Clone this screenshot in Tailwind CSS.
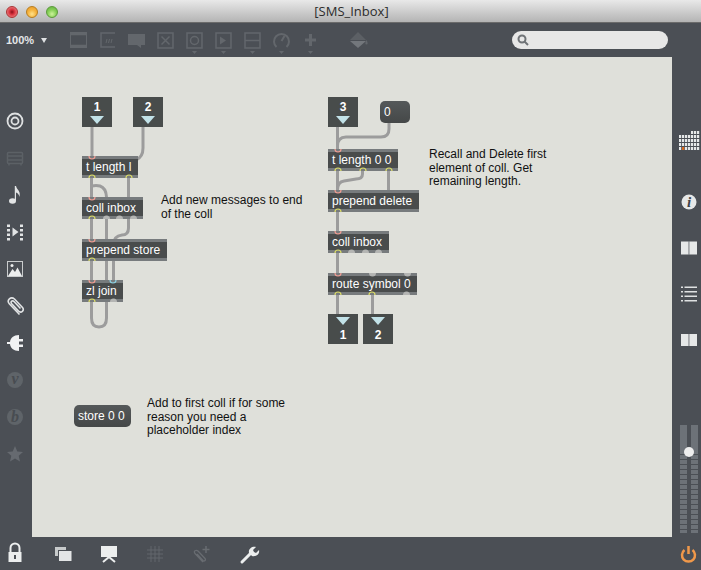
<!DOCTYPE html>
<html lang="en">
<head>
<meta charset="UTF-8">
<title>[SMS_Inbox]</title>
<script src="https://cdn.jsdelivr.net/npm/@tailwindcss/browser@4"></script>
</head>
<body class="w-[701px] h-[570px] overflow-hidden bg-[#4b4f55] font-['Liberation_Sans',Arial,sans-serif]">

<!-- title bar -->
<header class="h-[23px] relative flex items-center justify-center bg-gradient-to-b from-[#e9e9e9] to-[#b4b4b4] border-b border-[#6b6b6b]">
  <div class="absolute left-[6px] top-[6px] flex gap-[8px]">
    <span class="w-[12px] h-[12px] rounded-full border border-[#a33] bg-[radial-gradient(circle_at_50%_50%,#8a0f1a_0,#d8323c_35%,#f6a0a0_100%)]"></span>
    <span class="w-[12px] h-[12px] rounded-full border border-[#b87d1e] bg-[radial-gradient(circle_at_50%_70%,#ffe28a_0,#f5b23c_50%,#e89a2a_100%)]"></span>
    <span class="w-[12px] h-[12px] rounded-full border border-[#5b9a3a] bg-[radial-gradient(circle_at_50%_70%,#cdf39a_0,#86cf57_50%,#62b040_100%)]"></span>
  </div>
  <span class="text-[13px] leading-none text-[#2c2c2c] font-['Open_Sans',sans-serif] ml-[2px]">[SMS_Inbox]</span>
</header>

<!-- toolbar -->
<div class="h-[34px] flex items-start bg-[#4b4f55]">
  <div class="w-[64px] flex items-center pl-[6px] h-[34px] gap-[7px]">
    <span class="text-[11px] font-bold text-[#e4e6e8]">100%</span>
    <svg width="6" height="5" viewBox="0 0 6 5"><path d="M0 0h6L3 5z" fill="#dfe1e3"/></svg>
  </div>
  <svg width="29" height="34" viewBox="0 0 29 34" fill="none" stroke="#63676c"><rect x="6.500" y="9.500" width="16" height="15"/><path d="M7 11h15M7 23h15" stroke-width="2.500"/></svg>
  <svg width="29" height="34" viewBox="0 0 29 34" fill="none" stroke="#63676c" stroke-width="1.500"><path d="M22 10H8v14h14"/><path d="M13 20l1-4M15.500 20l1-4M18 20l1-4" stroke-width="1"/></svg>
  <svg width="29" height="34" viewBox="0 0 29 34"><path d="M6 11h17v11h-4v3l-4-3H6z" fill="#63676c"/></svg>
  <svg width="29" height="34" viewBox="0 0 29 34" fill="none" stroke="#63676c" stroke-width="1.500"><rect x="7" y="10" width="15" height="15"/><path d="M10.500 13.500l8 8M18.500 13.500l-8 8"/></svg>
  <svg width="29" height="34" viewBox="0 0 29 34" fill="none" stroke="#63676c" stroke-width="1.500"><rect x="7" y="10" width="15" height="15"/><circle cx="14.500" cy="17.500" r="4"/><path d="M12 28h5l-2.500 3z" fill="#63676c" stroke="none"/></svg>
  <svg width="29" height="34" viewBox="0 0 29 34" fill="none" stroke="#63676c" stroke-width="1.500"><rect x="7" y="10" width="15" height="15"/><path d="M11 13.500l6 4-6 4z" fill="#63676c" stroke="none"/><path d="M12 28h5l-2.500 3z" fill="#63676c" stroke="none"/></svg>
  <svg width="29" height="34" viewBox="0 0 29 34" fill="none" stroke="#63676c" stroke-width="1.500"><rect x="7" y="10" width="15" height="15"/><path d="M7 17.500h15"/><path d="M12 28h5l-2.500 3z" fill="#63676c" stroke="none"/></svg>
  <svg width="29" height="34" viewBox="0 0 29 34" fill="none" stroke="#63676c" stroke-width="2"><path d="M9.500 24a7.500 7.500 0 1 1 10 0"/><path d="M14.500 18l3-5"/><path d="M12 28h5l-2.500 3z" fill="#63676c" stroke="none"/></svg>
  <svg width="29" height="34" viewBox="0 0 29 34" fill="none" stroke="#63676c" stroke-width="3"><path d="M14.500 11v12M9 17h11"/><path d="M12 28h5l-2.500 3z" fill="#63676c" stroke="none"/></svg>
  <svg class="ml-[19px]" width="29" height="34" viewBox="0 0 29 34"><path d="M14 9l8 8H6z" fill="#5c6065"/><path d="M6 18h16l-8 7z" fill="#73777c"/><path d="M22.500 17c1.500 2.500 1.500 4.500 0 4.500s-1.500-2 0-4.500z" fill="#63676c"/></svg>
  <div class="ml-auto mr-[33px] mt-[8px] w-[156px] h-[18px] rounded-full bg-[#e7e7e7] flex items-center pl-[5px]">
    <svg width="12" height="12" viewBox="0 0 12 12" fill="none" stroke="#6f7377" stroke-width="2"><circle cx="5" cy="5" r="3.500"/><path d="M7.500 7.500L11 11"/></svg>
  </div>
</div>

<div class="h-[480px] flex">
  <!-- left rail -->
  <nav class="w-[32px] pt-[45px] flex flex-col">
    <svg width="32" height="37" viewBox="0 0 32 37" fill="none" stroke="#dfe1e2" stroke-width="1.800"><circle cx="15" cy="19" r="7.500"/><circle cx="15" cy="19" r="3.500"/></svg>
    <svg width="32" height="37" viewBox="0 0 32 37" fill="none" stroke="#5c6166" stroke-width="1.500"><rect x="7.500" y="13.500" width="15" height="11" rx="1"/><path d="M7.500 17h15M7.500 21h15M9 25v1.500M21 25v1.500"/></svg>
    <svg width="32" height="37" viewBox="0 0 32 37"><ellipse cx="12.500" cy="25" rx="3.500" ry="2.800" fill="#e2e4e5"/><path d="M14.800 10h1.200c.7 4 5 4.500 3.500 11-.5-2.500-2-4-3.500-4.500V25h-1.200z" fill="#e2e4e5"/></svg>
    <svg width="32" height="37" viewBox="0 0 32 37"><path d="M12.500 14.500l6 4.500-6 4.500z" fill="#e2e4e5"/><path d="M7 11.500h3v2.500H7zM7 16h3v2.500H7zM7 20.500h3V23H7zM7 25h3v2.500H7zM20 11.500h3v2.500h-3zM20 16h3v2.500h-3zM20 20.500h3V23h-3zM20 25h3v2.500h-3z" fill="#e2e4e5"/></svg>
    <svg width="32" height="37" viewBox="0 0 32 37"><rect x="7.500" y="11.500" width="15" height="15" fill="none" stroke="#c9cccd" stroke-width="1"/><path d="M8 26l4.500-7 2.500 3 2.500-4.500L22 26z" fill="#eceeee"/><circle cx="12" cy="15.500" r="1.500" fill="#eceeee"/></svg>
    <svg width="32" height="37" viewBox="0 0 32 37" fill="none" stroke="#e2e4e5" stroke-width="1.600"><path d="M19.500 27.500L9.500 17c-3.500-4 1.500-8 5-5l8 8.500c2.500 3-1.500 6-4 3.500l-7-7.500c-1.500-2 1-3.500 2.500-2l6.500 7"/></svg>
    <svg width="32" height="37" viewBox="0 0 32 37"><path d="M7 18h3c.5-4 3.500-7 9-7v4h4v2.500h-4v3h4V23h-4v4c-5.500 0-8.500-3-9-7H7z" fill="#f1f2f3"/></svg>
    <svg width="32" height="37" viewBox="0 0 32 37"><circle cx="15" cy="19" r="8" fill="#5f6469"/><text x="15" y="23" text-anchor="middle" font-family="Liberation Serif" font-style="italic" font-weight="700" font-size="16" fill="#484c51">v</text></svg>
    <svg width="32" height="37" viewBox="0 0 32 37"><circle cx="15" cy="19" r="8" fill="#5f6469"/><text x="15" y="24" text-anchor="middle" font-family="Liberation Serif" font-style="italic" font-weight="700" font-size="16" fill="#484c51">b</text></svg>
    <svg width="32" height="37" viewBox="0 0 32 37"><path d="M15 11l2.300 5.500 5.700.5-4.300 3.800 1.300 5.700-5-3-5 3 1.300-5.700L7 17l5.700-.5z" fill="#666a70"/></svg>
  </nav>

  <!-- patcher canvas -->
  <main class="relative w-[640px] h-[480px] bg-[#dfe0da] text-[12px] leading-[13.500px] text-[#111]">
    <!-- patch cords sit under the boxes -->
    <svg class="absolute inset-0" width="640" height="480" viewBox="32 57 640 480" fill="none" stroke="#9c9c9c" stroke-width="3">
      <path d="M92 127V156"/>
      <path d="M143 127V148Q143 157 136 160"/>
      <path d="M91.500 178V197"/>
      <path d="M92 186Q96 185 100 186Q106 188 106.500 197V302"/>
      <path d="M128.500 178V228Q128.500 235 122 235Q113.500 236 113.500 245V280"/>
      <path d="M91.500 219V239"/>
      <path d="M91.500 261V280"/>
      <path d="M91.500 302V318Q91.500 327 99 327Q106.500 327 106.500 318V300"/>
      <path d="M337.500 127V149"/>
      <path d="M389 123V129Q389 137 381 137H346Q337.500 137 337.500 146V149"/>
      <path d="M337.500 171V190"/>
      <path d="M362.500 171V174Q362.500 179 356 179L344 181Q337.500 182 337.500 190"/>
      <path d="M388.500 171V190"/>
      <path d="M337.500 212V231"/>
      <path d="M337.500 253V273"/>
      <path d="M337.500 295V314"/>
      <path d="M372.500 295V314"/>
    </svg>

    <!-- number boxes -->
    <div class="absolute left-[50px] top-[40px] w-[30px] h-[30px] bg-[#484c4b] flex flex-col items-center pt-[2px]">
      <span class="text-[12px] leading-[16px] font-bold text-white">1</span>
      <svg width="16" height="10" viewBox="0 0 16 10"><path d="M1 1h14L8 9z" fill="#c2e2e8"/></svg>
    </div>
    <div class="absolute left-[101px] top-[40px] w-[30px] h-[30px] bg-[#484c4b] flex flex-col items-center pt-[2px]">
      <span class="text-[12px] leading-[16px] font-bold text-white">2</span>
      <svg width="16" height="10" viewBox="0 0 16 10"><path d="M1 1h14L8 9z" fill="#c2e2e8"/></svg>
    </div>
    <div class="absolute left-[296px] top-[40px] w-[30px] h-[30px] bg-[#484c4b] flex flex-col items-center pt-[2px]">
      <span class="text-[12px] leading-[16px] font-bold text-white">3</span>
      <svg width="16" height="10" viewBox="0 0 16 10"><path d="M1 1h14L8 9z" fill="#c2e2e8"/></svg>
    </div>
    <div class="absolute left-[296px] top-[257px] w-[30px] h-[30px] bg-[#484c4b] flex flex-col items-center pt-[2px]">
      <svg width="16" height="10" viewBox="0 0 16 10"><path d="M1 1h14L8 9z" fill="#c2e2e8"/></svg>
      <span class="text-[12px] leading-[18px] font-bold text-white">1</span>
    </div>
    <div class="absolute left-[331px] top-[257px] w-[30px] h-[30px] bg-[#484c4b] flex flex-col items-center pt-[2px]">
      <svg width="16" height="10" viewBox="0 0 16 10"><path d="M1 1h14L8 9z" fill="#c2e2e8"/></svg>
      <span class="text-[12px] leading-[18px] font-bold text-white">2</span>
    </div>

    <!-- message boxes -->
    <div class="absolute left-[348px] top-[44px] w-[30px] h-[22px] rounded-[5px] bg-gradient-to-b from-[#55595a] to-[#454848] pl-[4px] text-[12px] leading-[22px] text-white">0</div>
    <div class="absolute left-[42px] top-[348px] w-[57px] h-[22px] rounded-[5px] bg-gradient-to-b from-[#55595a] to-[#454848] pl-[4px] text-[12px] leading-[22px] text-white">store 0 0</div>

    <!-- objects -->
    <div class="absolute left-[50px] top-[99px] w-[56px] h-[22px] border-y-[3px] border-[#777b7d] bg-[#494c4c] pl-[4px] leading-[16px] text-white">t length l</div>
    <div class="absolute left-[50px] top-[140px] w-[61px] h-[22px] border-y-[3px] border-[#777b7d] bg-[#494c4c] pl-[4px] leading-[16px] text-white">coll inbox</div>
    <div class="absolute left-[50px] top-[182px] w-[85px] h-[22px] border-y-[3px] border-[#777b7d] bg-[#494c4c] pl-[4px] leading-[16px] text-white">prepend store</div>
    <div class="absolute left-[50px] top-[223px] w-[41px] h-[22px] border-y-[3px] border-[#777b7d] bg-[#494c4c] pl-[4px] leading-[16px] text-white">zl join</div>
    <div class="absolute left-[296px] top-[92px] w-[70px] h-[22px] border-y-[3px] border-[#777b7d] bg-[#494c4c] pl-[4px] leading-[16px] text-white">t length 0 0</div>
    <div class="absolute left-[296px] top-[133px] w-[91px] h-[22px] border-y-[3px] border-[#777b7d] bg-[#494c4c] pl-[4px] leading-[16px] text-white">prepend delete</div>
    <div class="absolute left-[296px] top-[174px] w-[61px] h-[22px] border-y-[3px] border-[#777b7d] bg-[#494c4c] pl-[4px] leading-[16px] text-white">coll inbox</div>
    <div class="absolute left-[296px] top-[216px] w-[89px] h-[22px] border-y-[3px] border-[#777b7d] bg-[#494c4c] pl-[4px] leading-[16px] text-white">route symbol 0</div>

    <!-- ports -->
    <svg class="absolute inset-0 pointer-events-none" width="640" height="480" viewBox="32 57 640 480" fill="none" stroke-width="1.200">
      <g stroke="#ee9c92">
        <path d="M89 156A3 3 0 0 0 95 156"/>
        <path d="M89 197A3 3 0 0 0 95 197"/>
        <path d="M89 239A3 3 0 0 0 95 239"/>
        <path d="M89 280A3 3 0 0 0 95 280"/>
        <path d="M335 149A3 3 0 0 0 341 149"/>
        <path d="M335 190A3 3 0 0 0 341 190"/>
        <path d="M335 231A3 3 0 0 0 341 231"/>
        <path d="M335 273A3 3 0 0 0 341 273"/>
      </g>
      <path d="M110 280A3 3 0 0 0 116 280" stroke="#8ccfe0"/>
      <g stroke="#dcdd66">
        <path d="M89 178A3 3 0 0 1 95 178"/>
        <path d="M126 178A3 3 0 0 1 132 178"/>
        <path d="M89 219A3 3 0 0 1 95 219"/>
        <path d="M89 261A3 3 0 0 1 95 261"/>
        <path d="M89 302A3 3 0 0 1 95 302"/>
        <path d="M335 171A3 3 0 0 1 341 171"/>
        <path d="M360 171A3 3 0 0 1 366 171"/>
        <path d="M386 171A3 3 0 0 1 392 171"/>
        <path d="M335 212A3 3 0 0 1 341 212"/>
        <path d="M335 253A3 3 0 0 1 341 253"/>
        <path d="M335 295A3 3 0 0 1 341 295"/>
        <path d="M369 295A3 3 0 0 1 375 295"/>
      </g>
      <g fill="#b4b5b3">
        <path d="M103 219A3.500 3.500 0 0 1 110 219Z"/>
        <path d="M116 219A3.500 3.500 0 0 1 123 219Z"/>
        <path d="M130 219A3.500 3.500 0 0 1 137 219Z"/>
        <path d="M110 302A3.500 3.500 0 0 1 117 302Z"/>
        <path d="M348 253A3.500 3.500 0 0 1 355 253Z"/>
        <path d="M362 253A3.500 3.500 0 0 1 369 253Z"/>
        <path d="M375 253A3.500 3.500 0 0 1 382 253Z"/>
        <path d="M403 295A3.500 3.500 0 0 1 410 295Z"/>
        <path d="M369 273A3.500 3.500 0 0 0 376 273Z"/>
        <path d="M404 273A3.500 3.500 0 0 0 411 273Z"/>
      </g>
    </svg>

    <!-- comments -->
    <p class="absolute left-[129px] top-[137px] w-[150px]">Add new messages to end of the coll</p>
    <p class="absolute left-[397px] top-[91px] w-[125px]">Recall and Delete first element of coll. Get remaining length.</p>
    <p class="absolute left-[115px] top-[340px] w-[145px]">Add to first coll if for some reason you need a placeholder index</p>
  </main>

  <!-- right rail -->
  <aside class="relative w-[29px] pt-[61px] flex flex-col">
    <svg width="29" height="61" viewBox="0 0 29 61"><defs><pattern id="cells" x="7" y="13" width="3" height="4" patternUnits="userSpaceOnUse"><rect width="2.200" height="3" fill="#e6e8e8"/></pattern></defs><rect x="7" y="17" width="21" height="16" fill="url(#cells)"/><rect x="19" y="13" width="9" height="4" fill="url(#cells)"/><rect x="10" y="29" width="2.200" height="3" fill="#d9681d"/></svg>
    <svg width="29" height="46" viewBox="0 0 29 46"><circle cx="17" cy="23" r="7.500" fill="#e6e8e8"/><text x="17" y="28" text-anchor="middle" font-family="Liberation Serif" font-style="italic" font-weight="700" font-size="15" fill="#3f4347">i</text></svg>
    <svg width="29" height="46" viewBox="0 0 29 46"><path d="M9 16.500h7.500v13H9z" fill="#e6e8e8"/><path d="M16.500 16.500h1v13h-1z" fill="#b5b8ba"/><path d="M17.500 16.500H25v13h-7.500z" fill="#e6e8e8"/></svg>
    <svg width="29" height="46" viewBox="0 0 29 46"><path d="M9 15.500h2V17H9zM9 20h2v1.500H9zM9 24.500h2V26H9zM9 29h2v1.500H9zM12.500 15.500H25V17H12.500zM12.500 20H25v1.500H12.500zM12.500 24.500H25V26H12.500zM12.500 29H25v1.500H12.500z" fill="#dfe1e2"/></svg>
    <svg width="29" height="46" viewBox="0 0 29 46"><path d="M9 17h7.500v12H9z" fill="#e6e8e8"/><path d="M16.500 17h1v12h-1z" fill="#b5b8ba"/><path d="M17.500 17H25v12h-7.500z" fill="#e6e8e8"/></svg>
    <!-- level meter with gain thumb -->
    <svg class="absolute left-0 top-[367px]" width="29" height="110" viewBox="0 0 29 110">
      <defs><pattern id="bars" width="8" height="5" patternUnits="userSpaceOnUse" y="1"><rect width="8" height="4" fill="#6d7278"/></pattern></defs>
      <rect x="8" y="1" width="7" height="26" fill="#6d7278"/>
      <rect x="19" y="1" width="7" height="26" fill="#6d7278"/>
      <rect x="8" y="26" width="7" height="83" fill="url(#bars)"/>
      <rect x="19" y="26" width="7" height="83" fill="url(#bars)"/>
      <circle cx="17" cy="28" r="5" fill="#eeeeee"/>
    </svg>
  </aside>
</div>

<!-- bottom bar -->
<footer class="h-[33px] flex items-center">
  <svg class="w-[30px]" width="30" height="33" viewBox="0 0 30 33" fill="none"><path d="M10.500 15v-4a4.500 4.500 0 0 1 9 0v4" stroke="#eceeee" stroke-width="2"/><path d="M8.500 15h13v10h-13z" fill="#eceeee"/><path d="M15 18v4" stroke="#4b4f55" stroke-width="2"/></svg>
  <svg class="ml-[10px]" width="46" height="33" viewBox="0 0 46 33"><rect x="15" y="10" width="11" height="9" fill="#c7cacb"/><rect x="18.500" y="13.500" width="13.500" height="11" fill="#e3e5e6" stroke="#4b4f55"/></svg>
  <svg width="46" height="33" viewBox="0 0 46 33" fill="none"><path d="M15 9h16v11H15z" fill="#eceeee"/><path d="M23 20l-6 5M23 20l6 5" stroke="#eceeee" stroke-width="2"/></svg>
  <svg width="46" height="33" viewBox="0 0 46 33" fill="none" stroke="#63676c"><path d="M19 9v16M23 9v16M27 9v16M15 13h16M15 17h16M15 21h16"/></svg>
  <svg width="46" height="33" viewBox="0 0 46 33" fill="none" stroke="#686c71" stroke-width="1.300"><path d="M25 25l-8-8.500c-2-2.500 1-4 3-2.500l7 7.500c1.500 2-1 3-2 2l-6-6.500"/><path d="M28 9v7M24.500 12.500h7" stroke-width="1.500"/></svg>
  <svg class="ml-[1px]" width="46" height="33" viewBox="0 0 46 33" fill="none"><path d="M17 25l9-9" stroke="#eceeee" stroke-width="3" stroke-linecap="round"/><path d="M24 16c-1-4 3-7 7-6l-3 3 1 2 2 1 3-3c1 4-3 7-7 6z" fill="#eceeee"/></svg>
  <svg class="ml-auto" width="24" height="33" viewBox="0 0 24 33" fill="none" stroke="#f0984a" stroke-width="2.500"><path d="M7.500 13a6.500 6.500 0 1 0 8 0"/><path d="M11.500 9v8"/></svg>
</footer>

</body>
</html>
